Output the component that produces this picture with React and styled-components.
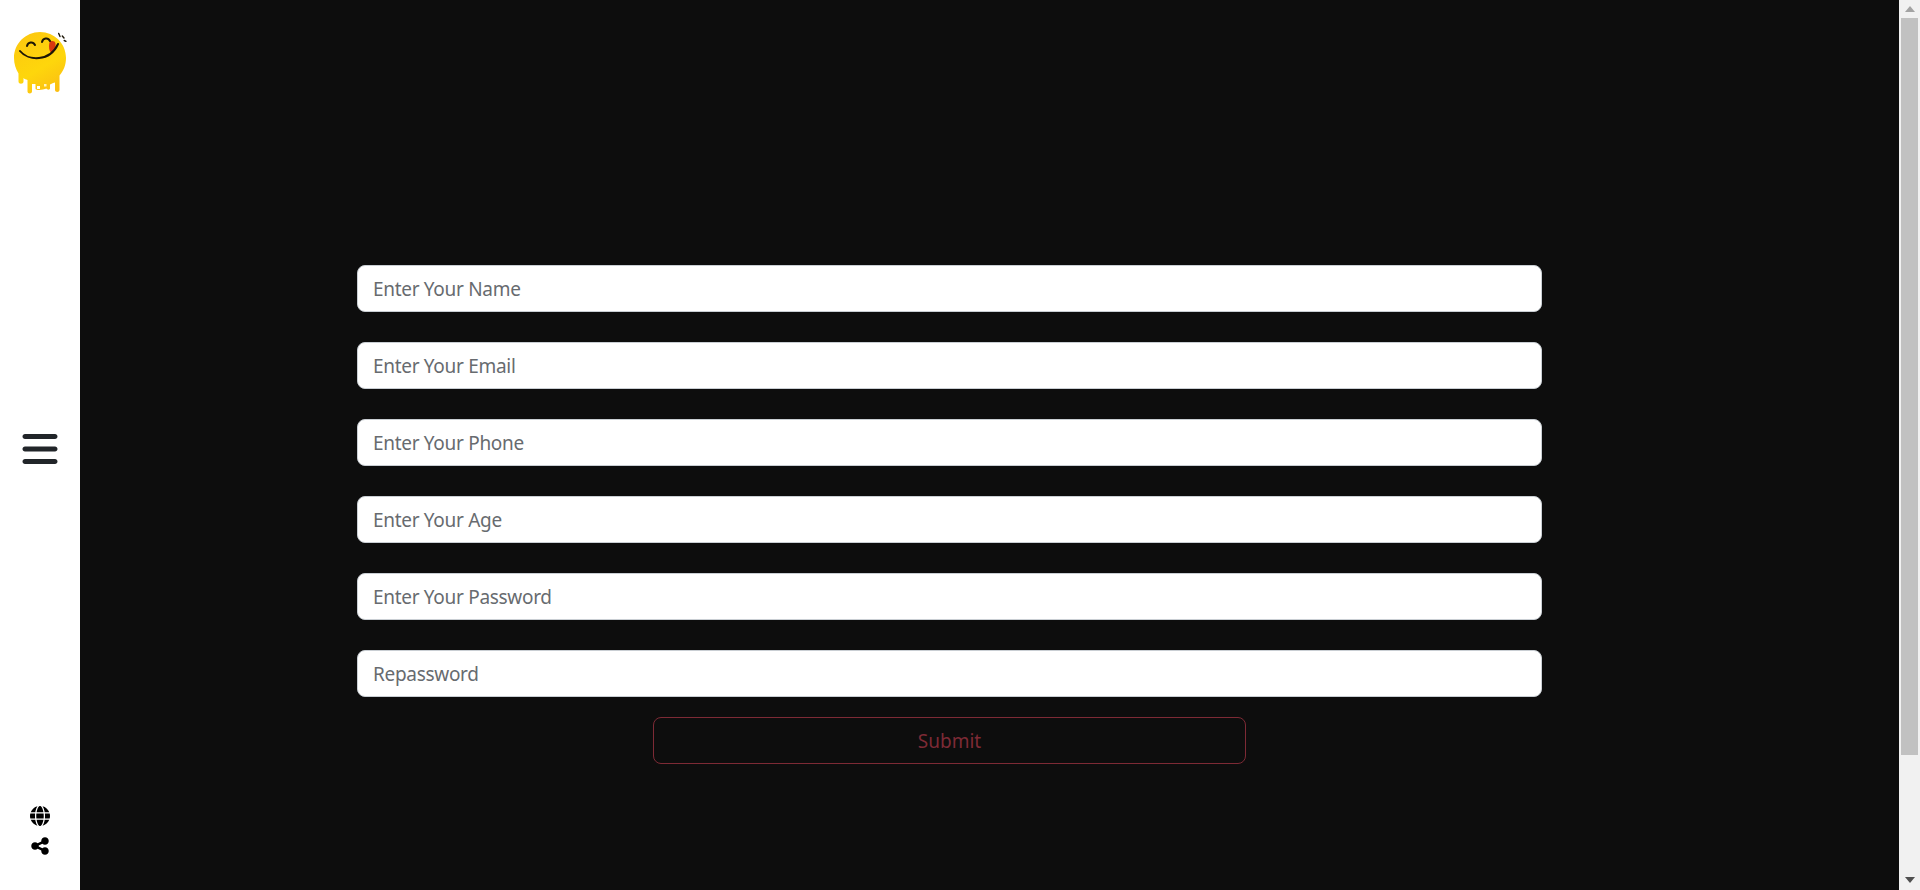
import styled, { createGlobalStyle } from "styled-components";
import { FaBars, FaGlobe, FaShareNodes } from "react-icons/fa6";

const fields = [
  "Enter Your Name",
  "Enter Your Email",
  "Enter Your Phone",
  "Enter Your Age",
  "Enter Your Password",
  "Repassword",
];

const Logo = () => (
  <svg width="56" height="66" viewBox="12 10 56 66" aria-label="logo">
    <defs>
      <linearGradient id="melt" x1="0.2" y1="0" x2="0.7" y2="1">
        <stop offset="0" stopColor="#fdc80f" />
        <stop offset="0.6" stopColor="#fed60c" />
        <stop offset="1" stopColor="#fbbf12" />
      </linearGradient>
    </defs>
    <path
      fill="url(#melt)"
      d="M40 12C54.4 12 66 23.6 66 38C66 45 63.5 51 59.5 55.5V70C59.5 72.6 55 72.6 55 70V62.5C54 62.5 51 64 50 64.5V68.5C50 70 47 70 46.5 68.5L43 69.5C41 70 37 70.5 35.5 69V64H32V71.5C32 74 27.5 74 27.5 71.5V60C26 59.5 24.5 59 23.5 58V61.5C23.5 64.5 18.5 64.5 18.5 61.5V53.5C15.8 49 14 44 14 38C14 23.6 25.6 12 40 12Z"
    />
    <rect x="37" y="66" width="3" height="3" fill="#ffffff" />
    <rect x="44" y="64" width="2.5" height="2.5" fill="#fff3c0" />
    <path d="M49.5 22.5C50.5 20.5 55 20.5 55.5 23.5C56 27 54 32 51.5 32.5C49 32 48.5 26 49.5 22.5Z" fill="#d8380f" />
    <path
      d="M20 31C28 41 50 42 58 24"
      fill="none"
      stroke="#1d1606"
      strokeWidth="2"
      strokeLinecap="round"
    />
    <path d="M27 26C28 22 33 21 35 25" fill="none" stroke="#1d1606" strokeWidth="2" strokeLinecap="round" />
    <path d="M42 22C43 18 48 17 50 21" fill="none" stroke="#1d1606" strokeWidth="2" strokeLinecap="round" />
    <path
      d="M58.7 13.5L60 16.5M62.3 16L64 18M64.2 20.5L66 21.3"
      fill="none"
      stroke="#1d1606"
      strokeWidth="1.4"
      strokeLinecap="round"
    />
  </svg>
);

export default function App() {
  return (
    <Page>
      <GlobalStyle />
      <Sidebar>
        <Logo />
        <MenuButton>
          <FaBars />
        </MenuButton>
        <SideActions>
          <FaGlobe />
          <FaShareNodes />
        </SideActions>
      </Sidebar>
      <Main>
        <Form onSubmit={(e) => e.preventDefault()}>
          {fields.map((name) => (
            <Field key={name} type="text" placeholder={name} />
          ))}
          <Submit type="submit">Submit</Submit>
        </Form>
      </Main>
      <ScrollStrip>
        <Arrow $up />
        <Thumb />
        <Arrow />
      </ScrollStrip>
    </Page>
  );
}

const GlobalStyle = createGlobalStyle`
  html, body {
    margin: 0;
    height: 100%;
    overflow: hidden;
    background: #0d0d0d;
  }
  * {
    box-sizing: border-box;
  }
`;

const Page = styled.div`
  display: flex;
  height: 890px;
  font-family: "Noto Sans", sans-serif;
`;

const Sidebar = styled.aside`
  width: 80px;
  flex: none;
  display: flex;
  flex-direction: column;
  align-items: center;
  padding: 30px 0 34px;
  background: #fff;
`;

const MenuButton = styled.div`
  margin: 333px 0 auto;
  font-size: 40px;
  line-height: 1;
  color: #212529;

  & svg {
    display: block;
  }
`;

const SideActions = styled.div`
  display: flex;
  flex-direction: column;
  align-items: center;
  gap: 10px;
  font-size: 20px;
  color: #000;

  & svg {
    display: block;
  }
`;

const Main = styled.main`
  flex: 1;
  padding: 265px 357px 0 277px;
  background: #0d0d0d;
`;

const Form = styled.form`
  display: flex;
  flex-direction: column;
  align-items: center;
`;

const Field = styled.input`
  width: 100%;
  height: 47px;
  margin-bottom: 30px;
  padding: 8px 15px;
  border: 1px solid #c9ced3;
  border-radius: 8px;
  background: #fff;
  font-family: inherit;
  font-size: 19px;
  letter-spacing: -0.3px;
  color: #212529;
  outline: none;

  &::placeholder {
    color: #676b6f;
    opacity: 1;
  }

  &:last-of-type {
    margin-bottom: 20px;
  }
`;

const Submit = styled.button`
  width: 50%;
  height: 47px;
  border: 1px solid #7d2a35;
  border-radius: 8px;
  background: transparent;
  font-family: inherit;
  font-size: 19px;
  color: #7d2a35;
`;

const ScrollStrip = styled.div`
  width: 21px;
  flex: none;
  display: flex;
  flex-direction: column;
  align-items: center;
  background: #f1f1f1;
`;

const Arrow = styled.div`
  width: 0;
  height: 0;
  margin: ${(p) => (p.$up ? "6px 0 6px" : "auto 0 7px")};
  border-left: 5px solid transparent;
  border-right: 5px solid transparent;
  border-bottom: ${(p) => (p.$up ? "6px solid #a3a3a3" : "none")};
  border-top: ${(p) => (p.$up ? "none" : "6px solid #505050")};
`;

const Thumb = styled.div`
  width: 17px;
  height: 737px;
  background: #c1c1c1;
`;
